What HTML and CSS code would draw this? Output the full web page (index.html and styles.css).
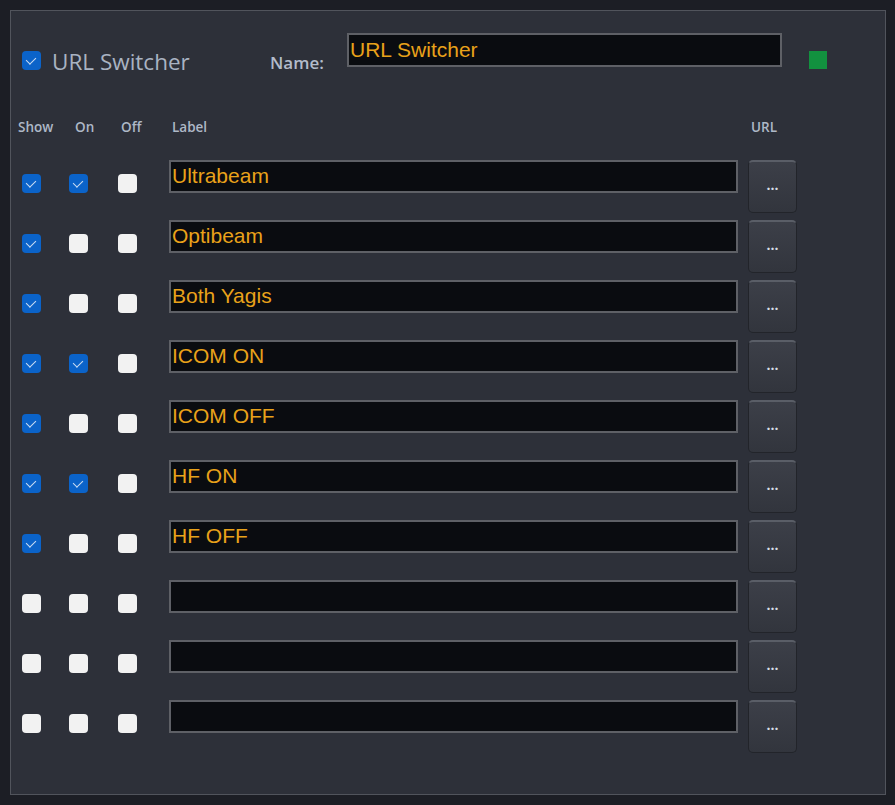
FILE: index.html
```html
<!DOCTYPE html>
<html lang="en">
<head>
    <meta charset="UTF-8">
    <title>URL Switcher</title>
    <link rel="stylesheet" href="styles.css">
</head>
<body>
    <div class="panel">
        <div class="header">
            <span class="check on big"></span>
            <span class="title">URL Switcher</span>
            <span class="name-label">Name:</span>
            <div class="field name-field">URL Switcher</div>
            <span class="status"></span>
        </div>

        <div class="grid cols">
            <span class="col col-show">Show</span>
            <span class="col col-on">On</span>
            <span class="col col-off">Off</span>
            <span class="col col-label">Label</span>
            <span class="col col-url">URL</span>
        </div>

        <div class="rows">
            <div class="grid row">
                <span class="check on"></span><span class="check on"></span><span class="check"></span>
                <div class="field">Ultrabeam</div><button class="dots">...</button>
            </div>
            <div class="grid row">
                <span class="check on"></span><span class="check"></span><span class="check"></span>
                <div class="field">Optibeam</div><button class="dots">...</button>
            </div>
            <div class="grid row">
                <span class="check on"></span><span class="check"></span><span class="check"></span>
                <div class="field">Both Yagis</div><button class="dots">...</button>
            </div>
            <div class="grid row">
                <span class="check on"></span><span class="check on"></span><span class="check"></span>
                <div class="field">ICOM ON</div><button class="dots">...</button>
            </div>
            <div class="grid row">
                <span class="check on"></span><span class="check"></span><span class="check"></span>
                <div class="field">ICOM OFF</div><button class="dots">...</button>
            </div>
            <div class="grid row">
                <span class="check on"></span><span class="check on"></span><span class="check"></span>
                <div class="field">HF ON</div><button class="dots">...</button>
            </div>
            <div class="grid row">
                <span class="check on"></span><span class="check"></span><span class="check"></span>
                <div class="field">HF OFF</div><button class="dots">...</button>
            </div>
            <div class="grid row">
                <span class="check"></span><span class="check"></span><span class="check"></span>
                <div class="field"></div><button class="dots">...</button>
            </div>
            <div class="grid row">
                <span class="check"></span><span class="check"></span><span class="check"></span>
                <div class="field"></div><button class="dots">...</button>
            </div>
            <div class="grid row">
                <span class="check"></span><span class="check"></span><span class="check"></span>
                <div class="field"></div><button class="dots">...</button>
            </div>
        </div>
    </div>
</body>
</html>
```

FILE: styles.css
```css
* {
    margin: 0;
    padding: 0;
    box-sizing: border-box;
}

body {
    font-family: 'Open Sans', 'Noto Sans', sans-serif;
    background: #1c1e25;
    color: #b3bccb;
    padding: 10px 9px 10px 10px;
    height: 805px;
}

.panel {
    background: #2d3039;
    border: 1px solid #51545c;
    height: 785px;
    padding: 22px 0 0 11px;
}

.header {
    display: flex;
    align-items: flex-start;
    height: 84px;
}

.header .big {
    margin-top: 18px;
    flex-shrink: 0;
}

.title {
    margin: 13px 0 0 11px;
    font-size: 22.5px;
    color: #a9b3c2;
    width: 218px;
    flex-shrink: 0;
}

.name-label {
    margin-top: 18px;
    font-size: 17px;
    font-weight: 600;
    width: 77px;
    flex-shrink: 0;
}

.status {
    width: 18px;
    height: 18px;
    background: #12913f;
    margin: 18px 0 0 27px;
    flex-shrink: 0;
}

.grid {
    display: grid;
    grid-template-columns: 47px 49px 51px 579px 50px;
    align-items: start;
}

.cols {
    height: 42px;
    padding-top: 1px;
}

.col {
    font-size: 13.5px;
    font-weight: 600;
    color: #aeb8c7;
}

.col-show { margin-left: -4px; }
.col-on { margin-left: 6px; }
.col-off { margin-left: 3px; }
.col-label { margin-left: 3px; }
.col-url { margin-left: 3px; }

.rows {
    display: flex;
    flex-direction: column;
    gap: 7px;
    padding-top: 1px;
}

.check {
    display: block;
    width: 19px;
    height: 19px;
    border-radius: 4px;
    background: #f2f2f2;
    margin-top: 14px;
    position: relative;
}

.check.on {
    background: #0b63c9;
}

.check.on::after {
    content: '';
    position: absolute;
    left: 6px;
    top: 4px;
    width: 5px;
    height: 8px;
    border: solid #c9dcf2;
    border-width: 0 1.5px 1.5px 0;
    transform: rotate(45deg);
}

.field {
    width: 569px;
    height: 33px;
    background: #0a0c10;
    border: 2px solid #5e6066;
    color: #e9a21a;
    font-family: 'Liberation Sans', Arial, sans-serif;
    font-size: 21px;
    line-height: 28px;
    padding-left: 1px;
}

.header .name-field {
    width: 435px;
    height: 34px;
    line-height: 29px;
    flex-shrink: 0;
}

.dots {
    width: 49px;
    height: 53px;
    border-radius: 5px;
    border: 1px solid #22242a;
    border-top: 2px solid #5a5e67;
    background: linear-gradient(#3c3f48, #32353d);
    color: #d8dde6;
    font-family: 'Open Sans', sans-serif;
    font-size: 14px;
    font-weight: 700;
    padding-bottom: 6px;
}
```
